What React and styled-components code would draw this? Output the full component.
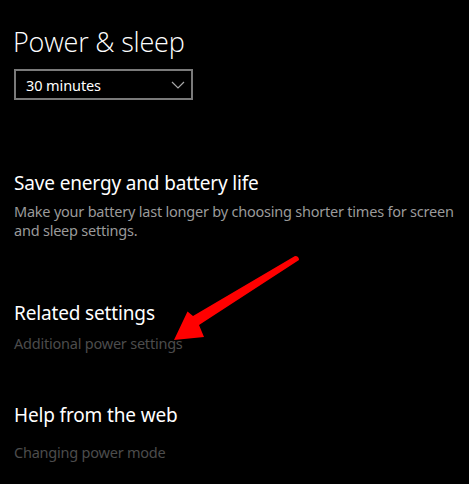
import React from 'react';
import styled, {createGlobalStyle} from 'styled-components';


const GlobalStyle = createGlobalStyle`
    html, body {
        margin: 0;
        padding: 0;
        background: #000;
    }
    body {
        font-family: "Noto Sans", "Open Sans", sans-serif;
        color: #fff;
    }
`;


const Page = styled.div`
    position: relative;
    width: 469px;
    height: 484px;
    overflow: hidden;
    background: #000;
    padding: 23px 0 0 14px;
    box-sizing: border-box;
`;


const Title = styled.h1`
    margin: 0 0 0 -1px;
    font-family: "Open Sans", "Noto Sans", sans-serif;
    font-weight: 300;
    font-size: 27px;
    line-height: 38px;
    letter-spacing: -0.2px;
`;


const Dropdown = styled.div`
    display: flex;
    align-items: center;
    justify-content: space-between;
    width: 179px;
    height: 31px;
    margin-top: 8px;
    box-sizing: border-box;
    border: 2px solid #7a7a7a;
    padding: 0 6px 0 10px;
    font-size: 14.5px;
    letter-spacing: -0.1px;
    color: #fff;
`;


const Section = styled.section`
    margin-top: ${p => p.gap}px;
`;


const Heading = styled.h2`
    margin: 0;
    font-weight: 400;
    font-size: 19px;
    line-height: 26px;
    letter-spacing: -0.15px;
`;


const Text = styled.p`
    margin: ${p => p.top}px 0 0;
    font-size: 14.5px;
    line-height: 19px;
    letter-spacing: -0.22px;
    color: ${p => p.muted ? '#4c4c4c' : '#9a9a9a'};
    max-width: 445px;
`;


const Arrow = styled.svg`
    position: absolute;
    left: 0;
    top: 0;
    pointer-events: none;
`;


const Chevron = () => (
    <svg width="14" height="8" viewBox="0 0 14 8">
        <path d="M1 1 L7 7 L13 1" fill="none" stroke="#a8a8a8" strokeWidth="1.2"/>
    </svg>
);


export default function App() {
    return (
        <Page>
            <GlobalStyle/>
            <Title>Power &amp; sleep</Title>
            <Dropdown>
                <span>30 minutes</span>
                <Chevron/>
            </Dropdown>

            <Section gap={70}>
                <Heading>Save energy and battery life</Heading>
                <Text top={6}>
                    Make your battery last longer by choosing shorter times for screen
                    and sleep settings.
                </Text>
            </Section>

            <Section gap={60}>
                <Heading>Related settings</Heading>
                <Text muted top={8}>Additional power settings</Text>
            </Section>

            <Section gap={49}>
                <Heading>Help from the web</Heading>
                <Text muted top={15}>Changing power mode</Text>
            </Section>

            <Arrow width="469" height="484" viewBox="0 0 469 484">
                <path
                    d="M295 256 Q299 256 299 260 L199 325 L204 337 L174 340 L187.5 311.5 L193 316 Z"
                    fill="#ff0000"
                />
            </Arrow>
        </Page>
    );
}
